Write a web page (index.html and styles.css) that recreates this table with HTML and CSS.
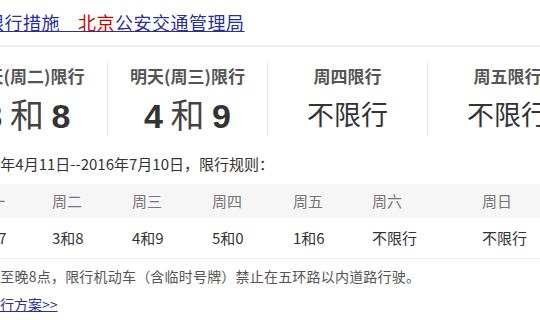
FILE: index.html
```html
<!DOCTYPE html>
<html>
<head>
<meta charset="utf-8">
<link rel="stylesheet" href="styles.css">
</head>
<body>
<div class="page">
  <h3 class="title"><a href="#">北京限行措施<span class="us">_</span><em>北京</em>公安交通管理局</a></h3>
  <div class="card">
    <div class="days">
      <div class="day">
        <div class="lbl">今天(周二)限行</div>
        <div class="big"><b>3</b> 和 <b>8</b></div>
      </div>
      <div class="day">
        <div class="lbl">明天(周三)限行</div>
        <div class="big"><b>4</b> 和 <b>9</b></div>
      </div>
      <div class="day">
        <div class="lbl">周四限行</div>
        <div class="free">不限行</div>
      </div>
      <div class="day">
        <div class="lbl">周五限行</div>
        <div class="free">不限行</div>
      </div>
    </div>
    <p class="rule">2016年4月11日--2016年7月10日，限行规则：</p>
    <div class="table">
      <div class="row head">
        <span>周一</span><span>周二</span><span>周三</span><span>周四</span><span>周五</span><span>周六</span><span>周日</span>
      </div>
      <div class="row data">
        <span>2和7</span><span>3和8</span><span>4和9</span><span>5和0</span><span>1和6</span><span>不限行</span><span>不限行</span>
      </div>
    </div>
    <p class="note">早7点至晚8点，限行机动车（含临时号牌）禁止在五环路以内道路行驶。</p>
    <a class="more" href="#">限行方案&gt;&gt;</a>
  </div>
</div>
</body>
</html>
```

FILE: styles.css
```css
html, body {
  margin: 0;
  padding: 0;
  background: #fff;
  overflow: hidden;
}

body {
  font-family: "Noto Sans CJK SC", "Noto Sans", sans-serif;
  color: #333;
}

.page {
  margin-left: -53px;
  width: 640px;
}

.title {
  margin: 0;
  padding: 10px 0 0 2px;
  height: 45px;
  box-sizing: border-box;
  font-size: 18px;
  font-weight: normal;
  line-height: 24px;
  letter-spacing: 0.5px;
  white-space: nowrap;
}

.title a {
  color: #2a2d9c;
  text-decoration: underline;
}

.title .us {
  letter-spacing: 8px;
}

.title em {
  font-style: normal;
  color: #c00;
}

.card {
  border-top: 2px solid #ececec;
}

.days {
  display: flex;
  padding-top: 15px;
}

.day {
  width: 160px;
  height: 74px;
  text-align: center;
  border-left: 1px solid #e6e6e6;
  box-sizing: border-box;
}

.day:first-child {
  border-left: none;
}

.lbl {
  margin-top: 4px;
  font-size: 17px;
  line-height: 20px;
  font-weight: bold;
  color: #555;
  white-space: nowrap;
}

.big {
  margin-top: 10px;
  font-size: 34px;
  line-height: 36px;
  color: #444;
  white-space: nowrap;
}

.big b {
  font-family: "Liberation Sans", Arial, sans-serif;
  font-weight: bold;
  color: #333;
}

.free {
  margin-top: 10px;
  font-size: 27px;
  line-height: 36px;
  color: #333;
}

.rule {
  margin: 18px 0 0;
  padding-left: 20px;
  font-size: 15px;
  line-height: 20px;
  color: #333;
  white-space: nowrap;
}

.table {
  margin-top: 10px;
}

.row {
  display: grid;
  grid-template-columns: 77px 80px 80px 81px 79px 110px 1fr;
  padding-left: 28px;
  font-size: 15px;
  white-space: nowrap;
}

.row.head {
  height: 34px;
  line-height: 34px;
  background: #f6f6f6;
  color: #777;
}

.row.data {
  height: 40px;
  line-height: 40px;
  color: #333;
  border-bottom: 1px solid #ececec;
}

.note {
  margin: 7px 0 0;
  padding-left: 17px;
  font-size: 14px;
  line-height: 20px;
  letter-spacing: 0.2px;
  color: #555;
  white-space: nowrap;
}

.more {
  display: block;
  margin-top: 8px;
  padding-left: 39px;
  font-size: 14px;
  line-height: 20px;
  color: #2a2d9c;
  text-decoration: underline;
}
```
